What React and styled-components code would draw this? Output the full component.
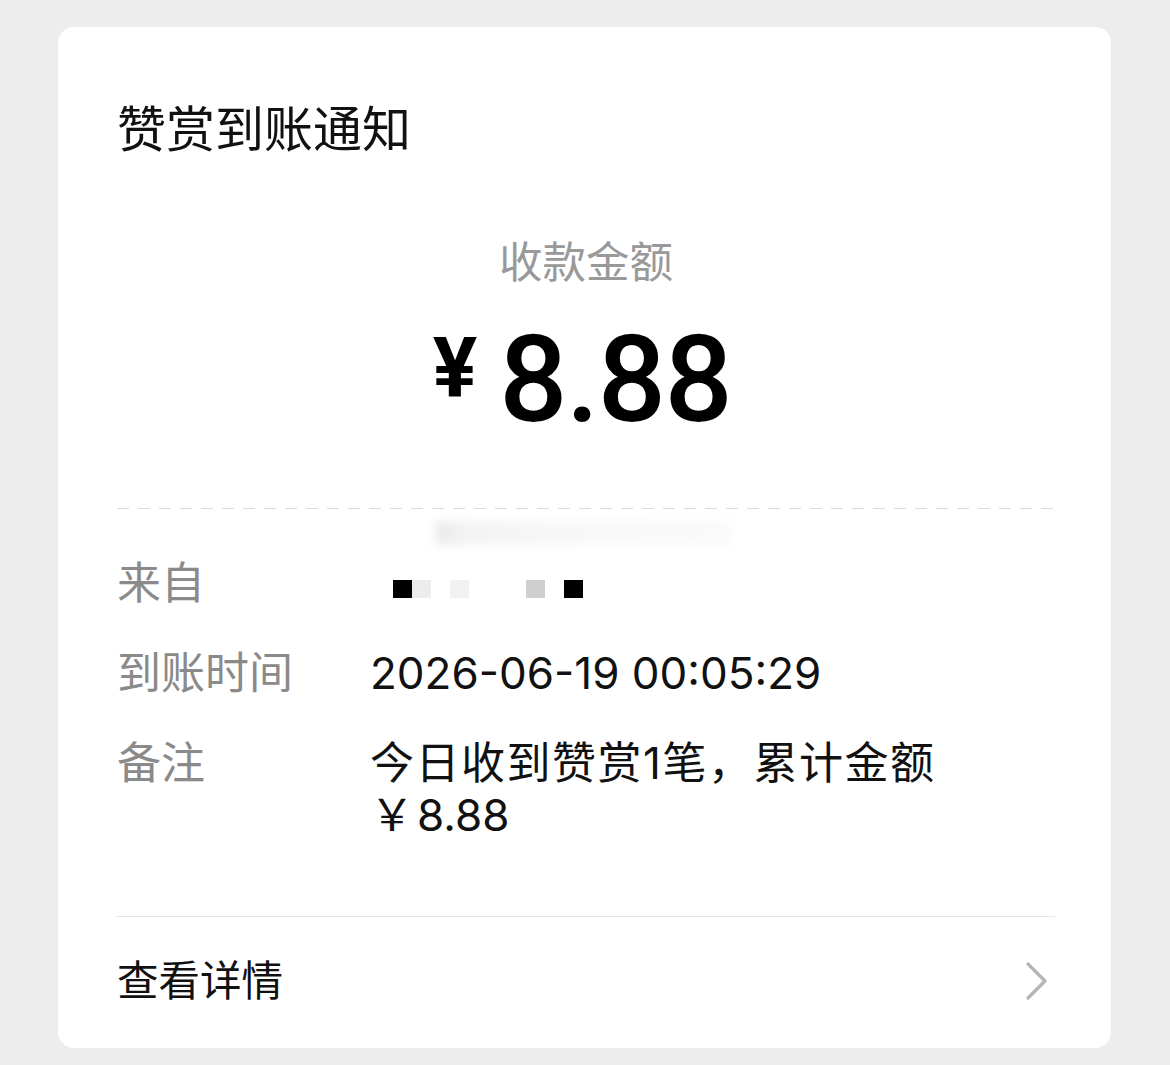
import React from 'react'
import styled, { createGlobalStyle } from 'styled-components'

const GlobalStyle = createGlobalStyle`
  body {
    margin: 0;
    background: #ededed;
    font-family: Inter, "Noto Sans CJK SC", sans-serif;
  }
`

const Page = styled.div`
  padding: 27px 59px 18px 58px;
`

const Card = styled.div`
  background: #fff;
  border-radius: 16px;
  padding: 69px 56px 41px 59px;
`

const Title = styled.div`
  font-size: 49px;
  line-height: 68px;
  font-weight: 400;
  color: #111;
`

const AmountBlock = styled.div`
  display: flex;
  flex-direction: column;
  align-items: center;
  margin-top: 67px;
`

const AmountLabel = styled.div`
  font-size: 43.5px;
  line-height: 62px;
  color: #999;
`

const AmountRow = styled.div`
  display: flex;
  align-items: flex-start;
  margin-top: 27px;
  font-family: Roboto, "Noto Sans CJK SC", sans-serif;
  color: #000;
  padding-right: 8px;
`

const Yen = styled.span`
  font-size: 83px;
  line-height: 83px;
  font-weight: 700;
  margin-top: 7px;
  margin-right: 22px;
`

const Digits = styled.span`
  font-size: 120px;
  line-height: 120px;
  font-weight: 500;
  letter-spacing: -1.5px;
`

const Rule = styled.div`
  height: 1px;
  margin-top: ${p => p.$top}px;
  background: ${p =>
    p.$dashed
      ? 'repeating-linear-gradient(90deg, #dcdcdc 0 12px, transparent 12px 21px)'
      : '#e6e6e6'};
`

const InfoList = styled.div`
  display: flex;
  flex-direction: column;
  gap: 38px;
  padding-top: 48px;
`

const InfoRow = styled.div`
  display: grid;
  grid-template-columns: 253px 1fr;
  font-size: 44px;
  line-height: 52px;
`

const Label = styled.div`
  color: #8a8a8a;
`

const Value = styled.div`
  color: #111;
  position: relative;
`

const Line = styled.div`
  letter-spacing: ${p => p.$spacing || 0}px;
`

const YenMark = styled.span`
  margin-right: 3px;
`

const Mosaic = styled.div`
  display: flex;
  height: 52px;
  align-items: center;
  padding-left: 23px;
  padding-top: 12px;
  box-sizing: border-box;
`

const Pixel = styled.span`
  width: 19px;
  height: 18px;
  background: ${p => p.$c};
`

const Smudge = styled.div`
  position: absolute;
  left: 66px;
  top: -36px;
  width: 295px;
  height: 24px;
  background: linear-gradient(90deg, #e2e2e2 0, #efefef 30px, #f5f5f5 120px, #f8f8f8 100%);
  filter: blur(5px);
  opacity: 0.75;
`

const Footer = styled.div`
  display: flex;
  align-items: center;
  justify-content: space-between;
  margin-top: 38px;
  font-size: 41.5px;
  line-height: 52px;
  color: #111;
`

const Chevron = styled.svg`
  width: 24px;
  height: 40px;
  margin-right: 6px;
`

const pixels = ['#000', '#ececec', '#fff', '#f1f1f1', '#fff', '#fff', '#fff', '#cfcfcf', '#fff', '#000']

export default function App() {
  return (
    <Page>
      <GlobalStyle />
      <Card>
        <Title>赞赏到账通知</Title>
        <AmountBlock>
          <AmountLabel>收款金额</AmountLabel>
          <AmountRow>
            <Yen>¥</Yen>
            <Digits>8.88</Digits>
          </AmountRow>
        </AmountBlock>
        <Rule $dashed $top={68} />
        <InfoList>
          <InfoRow>
            <Label>来自</Label>
            <Value>
              <Smudge />
              <Mosaic>
                {pixels.map((c, i) => (
                  <Pixel key={i} $c={c} />
                ))}
              </Mosaic>
            </Value>
          </InfoRow>
          <InfoRow>
            <Label>到账时间</Label>
            <Value>2026-06-19 00:05:29</Value>
          </InfoRow>
          <InfoRow>
            <Label>备注</Label>
            <Value>
              <Line $spacing={1.5}>今日收到赞赏1笔，累计金额</Line>
              <Line>
                <YenMark>￥</YenMark>8.88
              </Line>
            </Value>
          </InfoRow>
        </InfoList>
        <Rule $top={75} />
        <Footer>
          查看详情
          <Chevron viewBox="0 0 24 40">
            <polyline points="3,3 20,20 3,37" fill="none" stroke="#b5b5b5" strokeWidth="3.2" strokeLinecap="round" strokeLinejoin="round" />
          </Chevron>
        </Footer>
      </Card>
    </Page>
  )
}
